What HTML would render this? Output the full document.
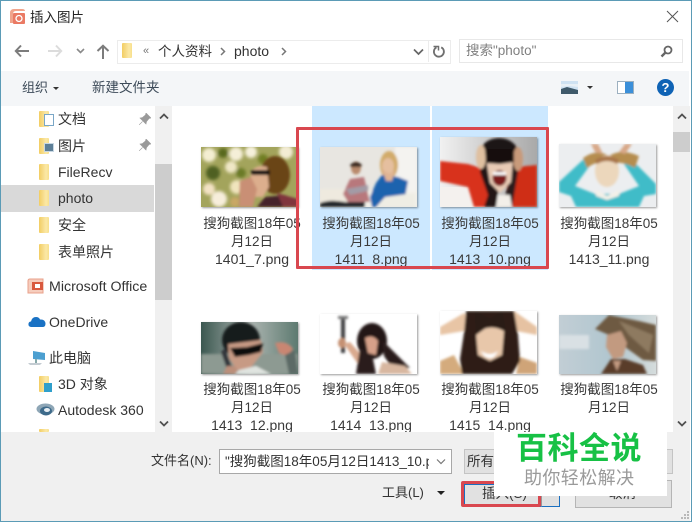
<!DOCTYPE html>
<html lang="zh">
<head>
<meta charset="utf-8">
<title>插入图片</title>
<style>
html,body{margin:0;padding:0;background:#fff}
#w{position:relative;width:692px;height:522px;overflow:hidden;background:#fff;font-family:"Liberation Sans","Noto Sans CJK SC",sans-serif;color:#333;filter:blur(.3px)}
#w div,#w svg{position:absolute}
.t{position:absolute;white-space:nowrap;line-height:20px;height:20px;font-size:14px}
.c{position:absolute;width:124px;text-align:center;font-size:13.5px;line-height:20px;height:20px;white-space:nowrap;color:#3a3a3a}
.f{font-size:14px}
.ph{box-shadow:1px 1px 2px rgba(0,0,0,.4)}
.fd{width:10px;height:16px;background:linear-gradient(90deg,#f2cd63,#fbe8a6 70%,#f8e08c);border-radius:1px}
</style>
</head>
<body>
<div id="w">
<!-- title bar -->
<svg style="left:9px;top:8px" width="17" height="17" viewBox="0 0 17 17"><path d="M1 15V5Q1 1 5 1H13Q16 1 16 3H7Q4 3 4 6V15Z" fill="#f0a48c"/><rect x="4" y="5" width="12" height="11" rx="1" fill="#ea7a64"/><circle cx="10" cy="10.500" r="3" fill="none" stroke="#fff" stroke-width="1.300"/></svg>
<span class="t" style="left:30px;top:8px;font-size:13.5px;color:#222">插入图片</span>
<svg style="left:666px;top:10px" width="13" height="13" viewBox="0 0 13 13"><path d="M1 1L12 12M12 1L1 12" stroke="#555" stroke-width="1" fill="none"/></svg>

<!-- nav row -->
<svg style="left:14px;top:44px" width="15" height="14" viewBox="0 0 15 14"><path d="M7 1.500L1.800 7L7 12.500M2 7H15" stroke="#7c7c7c" stroke-width="2" fill="none"/></svg>
<svg style="left:48px;top:44px" width="15" height="14" viewBox="0 0 15 14"><path d="M8 1.500L13.200 7L8 12.500M0 7H13" stroke="#dcdcdc" stroke-width="2" fill="none"/></svg>
<svg style="left:76px;top:48px" width="9" height="6" viewBox="0 0 9 6"><path d="M1 1L4.500 4.500L8 1" stroke="#8a8a8a" stroke-width="1.600" fill="none"/></svg>
<svg style="left:96px;top:44px" width="14" height="15" viewBox="0 0 14 15"><path d="M1.500 7L7 1.800L12.500 7M7 2V15" stroke="#7c7c7c" stroke-width="2" fill="none"/></svg>

<div style="left:117px;top:40px;width:332px;height:22px;border:1px solid #ececec;box-sizing:content-box"></div>
<div class="fd" style="left:122px;top:43px;width:10px;height:15px"></div>
<span class="t" style="left:143px;top:41px;font-size:11px;color:#777">«</span>
<span class="t" style="left:158px;top:42px;font-size:13.5px">个人资料</span>
<svg style="left:220px;top:47px" width="6" height="9" viewBox="0 0 6 9"><path d="M1 1L4.500 4.500L1 8" stroke="#777" stroke-width="1.500" fill="none"/></svg>
<span class="t" style="left:234px;top:41px;font-size:14px">photo</span>
<svg style="left:281px;top:47px" width="6" height="9" viewBox="0 0 6 9"><path d="M1 1L4.500 4.500L1 8" stroke="#777" stroke-width="1.500" fill="none"/></svg>
<svg style="left:413px;top:48px" width="11" height="8" viewBox="0 0 11 8"><path d="M1 1.500L5.500 6L10 1.500" stroke="#666" stroke-width="1.700" fill="none"/></svg>
<div style="left:428px;top:41px;width:1px;height:21px;background:#ececec"></div>
<svg style="left:432px;top:45px" width="14" height="14" viewBox="0 0 14 14"><path d="M3 3.500A5 5 0 1 0 7.500 1.800" stroke="#6f6f6f" stroke-width="1.800" fill="none" transform="rotate(20 7 7)"/><path d="M1.500 1.500H6.500V5.500" stroke="#6f6f6f" stroke-width="1.500" fill="none"/></svg>
<div style="left:459px;top:39px;width:222px;height:22px;border:1px solid #e8e8e8"></div>
<span class="t" style="left:466px;top:41px;font-size:13.5px;color:#808080">搜索"photo"</span>
<svg style="left:660px;top:45px" width="13" height="13" viewBox="0 0 13 13"><circle cx="8" cy="5" r="3.500" fill="none" stroke="#666" stroke-width="1.800"/><path d="M5.500 7.500L1.500 11.500" stroke="#666" stroke-width="2.400"/></svg>

<!-- command bar -->
<div style="left:1px;top:71px;width:688px;height:35px;background:#f4f6f8"></div>
<span class="t" style="left:22px;top:78px;font-size:13px;color:#3c4a58">组织</span>
<div style="left:53px;top:87px;width:0;height:0;border:3.500px solid transparent;border-top:3.500px solid #333;border-bottom:0"></div>
<span class="t" style="left:92px;top:78px;font-size:13.5px;color:#3c4a58">新建文件夹</span>
<svg style="left:561px;top:81px" width="17" height="13" viewBox="0 0 17 13"><rect width="17" height="13" fill="#cfe2f2"/><path d="M0 8L6 6L17 9V13H0Z" fill="#3f5a6b"/><path d="M0 3H17V6L8 5L0 6Z" fill="#e8f0f6"/></svg>
<div style="left:587px;top:86px;width:0;height:0;border:3px solid transparent;border-top:3px solid #333;border-bottom:0"></div>
<div style="left:617px;top:81px;width:15px;height:11px;border:1px solid #9cb0c0;background:linear-gradient(90deg,#fff 48%,#3b8fd9 48%)"></div>
<div style="left:657px;top:79px;width:17px;height:17px;background:#0f63b5;border-radius:50%;color:#fff;font:bold 13px/17px 'Liberation Sans',sans-serif;text-align:center">?</div>

<!-- nav pane -->
<div style="left:1px;top:185px;width:153px;height:27px;background:#d9d9d9"></div>
<div style="left:155px;top:106px;width:17px;height:326px;background:#f0f0f0"></div>
<div style="left:155px;top:164px;width:17px;height:136px;background:#cdcdcd"></div>
<svg style="left:159px;top:113px" width="10" height="7" viewBox="0 0 10 7"><path d="M1 5.500L5 1.500L9 5.500" stroke="#505050" stroke-width="1.800" fill="none"/></svg>
<svg style="left:159px;top:420px" width="10" height="7" viewBox="0 0 10 7"><path d="M1 1.500L5 5.500L9 1.500" stroke="#505050" stroke-width="1.800" fill="none"/></svg>

<div class="fd" style="left:39px;top:111px"></div>
<div style="left:44px;top:114px;width:8px;height:10px;background:#fff;border:1px solid #7aa7c7"></div>
<span class="t" style="left:58px;top:109px">文档</span>
<svg style="left:139px;top:113px" width="12" height="12" viewBox="0 0 12 12"><path d="M7 0L12 5L10 5.500L7.500 8.500L7 11L1 5L3.500 4.500L6.500 2Z M3.500 8.500L0 12" fill="#9a9a9a" stroke="#9a9a9a" stroke-width=".6"/></svg>
<div class="fd" style="left:39px;top:138px"></div>
<div style="left:44px;top:143px;width:8px;height:7px;background:#5d7f97;border:1px solid #c8d7e2"></div>
<span class="t" style="left:58px;top:136px">图片</span>
<svg style="left:139px;top:139px" width="12" height="12" viewBox="0 0 12 12"><path d="M7 0L12 5L10 5.500L7.500 8.500L7 11L1 5L3.500 4.500L6.500 2Z M3.500 8.500L0 12" fill="#9a9a9a" stroke="#9a9a9a" stroke-width=".6"/></svg>
<div class="fd" style="left:39px;top:164px"></div>
<span class="t" style="left:58px;top:162px">FileRecv</span>
<div class="fd" style="left:39px;top:190px"></div>
<span class="t" style="left:58px;top:188px">photo</span>
<div class="fd" style="left:39px;top:217px"></div>
<span class="t" style="left:58px;top:215px">安全</span>
<div class="fd" style="left:39px;top:244px"></div>
<span class="t" style="left:58px;top:242px">表单照片</span>
<svg style="left:27px;top:278px" width="17" height="16" viewBox="0 0 17 16"><path d="M1 15V3Q1 1 3 1H16V15Z" fill="#f6cdbd" stroke="#e8a08a"/><rect x="5" y="4" width="11" height="8" fill="#d9593e"/><rect x="8" y="6" width="5" height="4" fill="#fff"/></svg>
<span class="t" style="left:49px;top:277px;font-size:14.200px">Microsoft Office</span>
<svg style="left:28px;top:315px" width="18" height="13" viewBox="0 0 18 13"><path d="M3 12Q0 11.500 .5 8.500Q1 6.500 3 6.500Q4 2 8 2Q11 2 12 4.500Q17 4 17.500 8.500Q17.500 12 15 12Z" fill="#1a72c4"/></svg>
<span class="t" style="left:49px;top:312px">OneDrive</span>
<svg style="left:28px;top:350px" width="18" height="16" viewBox="0 0 18 16"><path d="M5 1L17 3V10L5 9Z" fill="#4c9fd0"/><path d="M0 13H14L12 15H2Z" fill="#c4ccd2"/><path d="M8 9V13" stroke="#8aa" stroke-width="2"/></svg>
<span class="t" style="left:49px;top:348px">此电脑</span>
<div class="fd" style="left:39px;top:376px"></div>
<div style="left:44px;top:383px;width:8px;height:9px;background:#2f9fcb"></div>
<span class="t" style="left:58px;top:374px">3D 对象</span>
<svg style="left:36px;top:402px" width="19" height="16" viewBox="0 0 19 16"><ellipse cx="9.500" cy="7" rx="9" ry="5.500" fill="#8ea6b6"/><ellipse cx="10" cy="9" rx="6" ry="4.500" fill="#3d6a8a"/><ellipse cx="11" cy="8" rx="3" ry="2" fill="#e6edf2"/></svg>
<span class="t" style="left:58px;top:400px">Autodesk 360</span>
<div class="fd" style="left:39px;top:429px;height:3px"></div>

<!-- selection -->
<div style="left:312px;top:106px;width:118px;height:164px;background:#cce8ff"></div>
<div style="left:432px;top:106px;width:116px;height:164px;background:#cce8ff"></div>

<!-- right scrollbar -->
<div style="left:673px;top:106px;width:17px;height:326px;background:#f0f0f0"></div>
<div style="left:673px;top:132px;width:17px;height:20px;background:#cdcdcd"></div>
<svg style="left:677px;top:113px" width="10" height="7" viewBox="0 0 10 7"><path d="M1 5.500L5 1.500L9 5.500" stroke="#505050" stroke-width="1.800" fill="none"/></svg>
<svg style="left:677px;top:420px" width="10" height="7" viewBox="0 0 10 7"><path d="M1 1.500L5 5.500L9 1.500" stroke="#505050" stroke-width="1.800" fill="none"/></svg>

<svg width="0" height="0" style="left:0;top:0"><defs><filter id="b" x="-5%" y="-5%" width="110%" height="110%"><feGaussianBlur stdDeviation="1.300"/></filter><filter id="bb"><feGaussianBlur stdDeviation="1.600"/></filter></defs></svg>

<!-- photo 1 -->
<svg class="ph" style="left:201px;top:147px" width="97" height="60" viewBox="0 0 97 60"><rect width="97" height="60" fill="#a3a45c"/><g filter="url(#bb)"><circle cx="8" cy="8" r="7" fill="#f4eed2"/><circle cx="22" cy="6" r="5" fill="#58691c"/><circle cx="35" cy="7" r="7" fill="#f5efd8"/><circle cx="50" cy="5" r="6" fill="#f6f1dc"/><circle cx="62" cy="12" r="5" fill="#6f7e22"/><circle cx="85" cy="5" r="7" fill="#f3ecd4"/><circle cx="12" cy="26" r="7" fill="#4f6120"/><circle cx="30" cy="20" r="6" fill="#efe7c6"/><circle cx="8" cy="42" r="6" fill="#f3e2c4"/><circle cx="18" cy="52" r="8" fill="#f7eedb"/><circle cx="36" cy="40" r="7" fill="#f0e4bd"/><circle cx="40" cy="26" r="5" fill="#6b7a26"/><circle cx="34" cy="55" r="5" fill="#c9a765"/></g><g filter="url(#b)"><ellipse cx="74" cy="28" rx="15" ry="19" fill="#6b4519"/><path d="M50 25Q55 17 66 20L68 40L62 50H54L49 36Z" fill="#dcae8d"/><rect x="50" y="23" width="19" height="5" rx="2" fill="#111"/><path d="M39 34L50 30L56 42L52 60H38Z" fill="#c98f74"/><path d="M56 60L64 50L84 48L97 56V60Z" fill="#44202a"/><path d="M76 46L97 52V60H82Z" fill="#80353c"/></g></svg>
<!-- photo 2 -->
<svg class="ph" style="left:320px;top:147px" width="97" height="60" viewBox="0 0 97 60"><rect width="97" height="60" fill="#e8e6e1"/><g filter="url(#b)"><rect x="75" width="22" height="45" fill="#f4f3f0"/><rect x="10" y="44" width="87" height="16" fill="#f4f2ea"/><rect x="0" y="42" width="35" height="18" fill="#efeadf"/><path d="M0 60V56Q10 52 25 55L45 55V60Z" fill="#23252b"/><ellipse cx="36" cy="21" rx="5" ry="6.500" fill="#b98a6c"/><path d="M30 18Q36 12 42 18L41 20H31Z" fill="#3a2a20"/><path d="M23 47L30 32L44 30L50 55H28Z" fill="#b8787c"/><path d="M26 42L48 38L48 44L30 48Z" fill="#a39ba6"/><ellipse cx="69" cy="18" rx="9" ry="14" fill="#d2ab6a"/><ellipse cx="68" cy="19" rx="6" ry="8" fill="#e5bf9f"/><path d="M50 50L56 36L62 28L78 30L88 34L85 50L66 50L62 60H52Z" fill="#1f63ae"/><path d="M62 22L70 27L75 22L72 34L66 34Z" fill="#e0b494"/><path d="M56 60L65 50L95 46V60Z" fill="#efede4"/></g></svg>
<!-- photo 3 -->
<svg class="ph" style="left:440px;top:137px" width="97" height="70" viewBox="0 0 97 70"><defs><linearGradient id="g3" x1="0" x2="1"><stop offset="0" stop-color="#f1f1f1"/><stop offset="1" stop-color="#a9a9a9"/></linearGradient></defs><rect width="97" height="70" fill="url(#g3)"/><rect y="50" width="45" height="20" fill="#f4f1ee"/><g filter="url(#b)"><path d="M0 24L28 27L44 32L50 70H34L28 50L0 44Z" fill="#d8321a"/><path d="M97 28L76 30L68 42L64 70H97Z" fill="#cf2e18"/><ellipse cx="59" cy="18" rx="20" ry="17" fill="#1c1416"/><path d="M44 14L40 35L48 58L44 70H56L60 40Z" fill="#201618"/><path d="M74 14L78 35L72 70H62L70 40Z" fill="#2a1c1c"/><ellipse cx="41" cy="20" rx="5" ry="12" fill="#dfc0a0"/><ellipse cx="78" cy="22" rx="5" ry="12" fill="#c89a7a"/><path d="M46 22H73L71 45L60 56L50 46Z" fill="#e8cbb5"/><path d="M45 12H74V25L60 27L46 26Z" fill="#17100f"/><ellipse cx="59.500" cy="41" rx="7" ry="8" fill="#7c1a1a"/><path d="M53 35H66V38H53Z" fill="#fff"/><path d="M58 58L70 58L72 70H56Z" fill="#f3efe9"/></g></svg>
<!-- photo 4 -->
<svg class="ph" style="left:559px;top:144px" width="97" height="63" viewBox="0 0 97 63"><rect width="97" height="63" fill="#eceef0"/><g filter="url(#b)"><path d="M0 38L26 14L32 20L16 42L36 50L60 50L80 42L65 20L71 14L97 40V50L85 52L80 63H17L12 52L0 48Z" fill="#41bcc8"/><path d="M24 14Q38 4 50 12Q62 4 80 12L76 24Q62 16 50 20Q38 16 28 24Z" fill="#b58d50"/><path d="M36 8L32 0H39L44 10M60 8L66 0H73L66 10" fill="#d8a888"/><ellipse cx="48" cy="27" rx="12" ry="16" fill="#ecd7bc"/><path d="M36 16Q48 8 60 16L58 20Q48 14 38 20Z" fill="#a9764a"/><path d="M37 46L48 52L60 46L60 52L48 56L37 52Z" fill="#f4f1e8"/></g></svg>

<!-- captions row 1 -->
<span class="c" style="left:190px;top:214px">搜狗截图18年05</span><span class="c" style="left:190px;top:232px">月12日</span><span class="c f" style="left:190px;top:249px">1401_7.png</span>
<span class="c" style="left:309px;top:214px">搜狗截图18年05</span><span class="c" style="left:309px;top:232px">月12日</span><span class="c f" style="left:309px;top:249px">1411_8.png</span>
<span class="c" style="left:428px;top:214px">搜狗截图18年05</span><span class="c" style="left:428px;top:232px">月12日</span><span class="c f" style="left:428px;top:249px">1413_10.png</span>
<span class="c" style="left:547px;top:214px">搜狗截图18年05</span><span class="c" style="left:547px;top:232px">月12日</span><span class="c f" style="left:547px;top:249px">1413_11.png</span>

<!-- red rectangle -->
<div style="left:296px;top:127px;width:247px;height:136px;border:3px solid #d9474f;border-radius:1px"></div>

<!-- row 2 photos -->
<svg class="ph" style="left:201px;top:322px" width="97" height="52" viewBox="0 0 97 52"><defs><linearGradient id="g5" x1="0" x2="1"><stop offset="0" stop-color="#3b5750"/><stop offset=".5" stop-color="#aeb6b2"/><stop offset="1" stop-color="#5d7a70"/></linearGradient></defs><rect width="97" height="52" fill="url(#g5)"/><g filter="url(#b)"><rect y="32" width="97" height="20" fill="#8d9a92"/><ellipse cx="40" cy="18" rx="19" ry="18" fill="#191a1c"/><path d="M27 22L60 18L62 30L48 48H36L28 36Z" fill="#c79a84"/><path d="M29 26L46 25L62 21L60 30L48 33L34 35Z" fill="#111"/><path d="M24 26L32 48L27 50L20 30Z" fill="#30363a"/><path d="M26 44L34 44L38 52H22Z" fill="#bb8f7a"/><path d="M38 48L55 44L70 52H34Z" fill="#e0e4e0"/><path d="M74 21Q86 18 92 27L86 34L78 31Z" fill="#c98672"/><path d="M84 33L94 28L97 52H88Z" fill="#5c6a66"/></g></svg>
<svg class="ph" style="left:320px;top:314px" width="97" height="60" viewBox="0 0 97 60"><rect width="97" height="60" fill="#fff"/><g filter="url(#b)"><rect x="18" y="2" width="10" height="3" fill="#777"/><rect x="21" y="5" width="4" height="34" fill="#3c3c40"/><ellipse cx="22" cy="29" rx="4" ry="5" fill="#c59072"/><path d="M24 30L38 50L44 44L30 28Z" fill="#d9a98e"/><ellipse cx="52" cy="27" rx="15" ry="18" fill="#231517"/><path d="M40 34L36 60H56L52 40Z" fill="#2a1a1c"/><path d="M45 24Q53 20 58 27L56 41L48 39Z" fill="#d6a089"/><path d="M62 26L90 54L72 54L64 42Z" fill="#2c1b1c"/><path d="M62 48L85 52L92 60H58Z" fill="#d8b7a0"/></g></svg>
<svg class="ph" style="left:440px;top:311px" width="97" height="63" viewBox="0 0 97 63"><rect width="97" height="63" fill="#fff"/><g filter="url(#b)"><path d="M0 16L24 2L30 8L24 20L0 24Z" fill="#e8c5a5"/><path d="M97 16L74 0L68 6L76 20L97 24Z" fill="#e6c2a2"/><path d="M0 50L14 44L24 63H0Z" fill="#d4ab7d"/><path d="M97 52L80 46L76 63H97Z" fill="#cfa478"/><path d="M26 0H74L78 24L80 50L72 63H22L20 48L24 22Z" fill="#2d1c15"/><path d="M36 22Q50 12 64 20L62 44L50 50L38 44Z" fill="#e8c7aa"/><path d="M35 0L50 8L62 0L66 20L50 14L36 24Z" fill="#2a1a12"/><path d="M41 40Q50 46 58 40Q54 48 50 47Q44 47 41 40Z" fill="#fff"/></g></svg>
<svg class="ph" style="left:559px;top:315px" width="97" height="59" viewBox="0 0 97 59"><defs><linearGradient id="g8" x1="0" x2="1"><stop offset="0" stop-color="#c2ced5"/><stop offset=".55" stop-color="#b0c6cf"/><stop offset="1" stop-color="#d5dcdc"/></linearGradient></defs><rect width="97" height="59" fill="url(#g8)"/><g filter="url(#b)"><rect x="0" y="20" width="30" height="14" fill="#d9e0e4"/><path d="M36 14L50 0L80 6L97 10V46L84 45L66 32L50 20Z" fill="#6e5a42"/><path d="M60 6L94 20L90 38L70 20Z" fill="#8e7a60"/><path d="M48 20L62 16L68 28L64 42L54 44L47 32Z" fill="#c29a80"/><path d="M42 59L52 44L66 44L84 50L88 59Z" fill="#5a3c2a"/><path d="M54 46L62 46L58 56Z" fill="#c29a80"/></g></svg>

<!-- captions row 2 -->
<span class="c" style="left:190px;top:380px">搜狗截图18年05</span><span class="c" style="left:190px;top:398px">月12日</span><span class="c f" style="left:190px;top:415px">1413_12.png</span>
<span class="c" style="left:309px;top:380px">搜狗截图18年05</span><span class="c" style="left:309px;top:398px">月12日</span><span class="c f" style="left:309px;top:415px">1414_13.png</span>
<span class="c" style="left:428px;top:380px">搜狗截图18年05</span><span class="c" style="left:428px;top:398px">月12日</span><span class="c f" style="left:428px;top:415px">1415_14.png</span>
<span class="c" style="left:547px;top:380px">搜狗截图18年05</span><span class="c" style="left:547px;top:398px">月12日</span>

<!-- bottom panel -->
<div style="left:1px;top:432px;width:689px;height:89px;background:#f0f0f0"></div>
<span class="t" style="left:151px;top:451px;font-size:13px">文件名(N):</span>
<div style="left:219px;top:449px;width:231px;height:23px;background:#fff;border:1px solid #a8a8a8"></div>
<div style="left:225px;top:451px;width:204px;height:21px;overflow:hidden"><span class="t" style="left:0;top:1px;font-size:13.5px">"搜狗截图18年05月12日1413_10.png</span></div>
<svg style="left:436px;top:458px" width="10" height="7" viewBox="0 0 10 7"><path d="M1 1.500L5 5.500L9 1.500" stroke="#777" stroke-width="1.200" fill="none"/></svg>
<div style="left:464px;top:449px;width:207px;height:23px;background:#e1e1e1;border:1px solid #c4c4c4"></div>
<span class="t" style="left:467px;top:452px;font-size:13.5px">所有</span>
<span class="t" style="left:382px;top:483px;font-size:13px">工具(L)</span>
<div style="left:437px;top:491px;width:0;height:0;border:4px solid transparent;border-top:4px solid #222;border-bottom:0"></div>
<div style="left:463px;top:483px;width:74px;height:20px;background:#e1e1e1;border:2px solid #1a6fc0"></div>
<div style="left:541px;top:481px;width:17px;height:24px;background:#e1e1e1;border:1px solid #1a6fc0;border-left:1px solid #999"></div>
<div style="left:461px;top:481px;width:74px;height:20px;border:3px solid #d9474f;border-radius:2px"></div>
<span class="t" style="left:482px;top:484px;font-size:13.5px">插入(S)</span>
<div style="left:575px;top:480px;width:95px;height:26px;background:#e1e1e1;border:1px solid #b5b5b5"></div>
<span class="t" style="left:609px;top:484px;font-size:13.5px">取消</span>

<!-- watermark -->
<div style="left:494px;top:432px;width:173px;height:64px;background:#fff"></div>
<span class="t" style="left:516px;top:431px;height:36px;line-height:36px;font-size:31px;font-weight:bold;color:#17c145;letter-spacing:.5px">百科全说</span>
<span class="t" style="left:524px;top:467px;height:22px;line-height:22px;font-size:18px;letter-spacing:.4px;color:#9a9a9a">助你轻松解决</span>

<!-- grip -->
<svg style="left:680px;top:510px" width="10" height="10" viewBox="0 0 10 10"><path d="M7 1h2v2H7zM7 4h2v2H7zM4 4h2v2H4zM7 7h2v2H7zM4 7h2v2H4zM1 7h2v2H1z" fill="#b8b8b8"/></svg>

<!-- window border -->
<div style="left:0;top:0;width:690px;height:520px;border:1px solid #5b9bb6"></div>
</div>
</body>
</html>
